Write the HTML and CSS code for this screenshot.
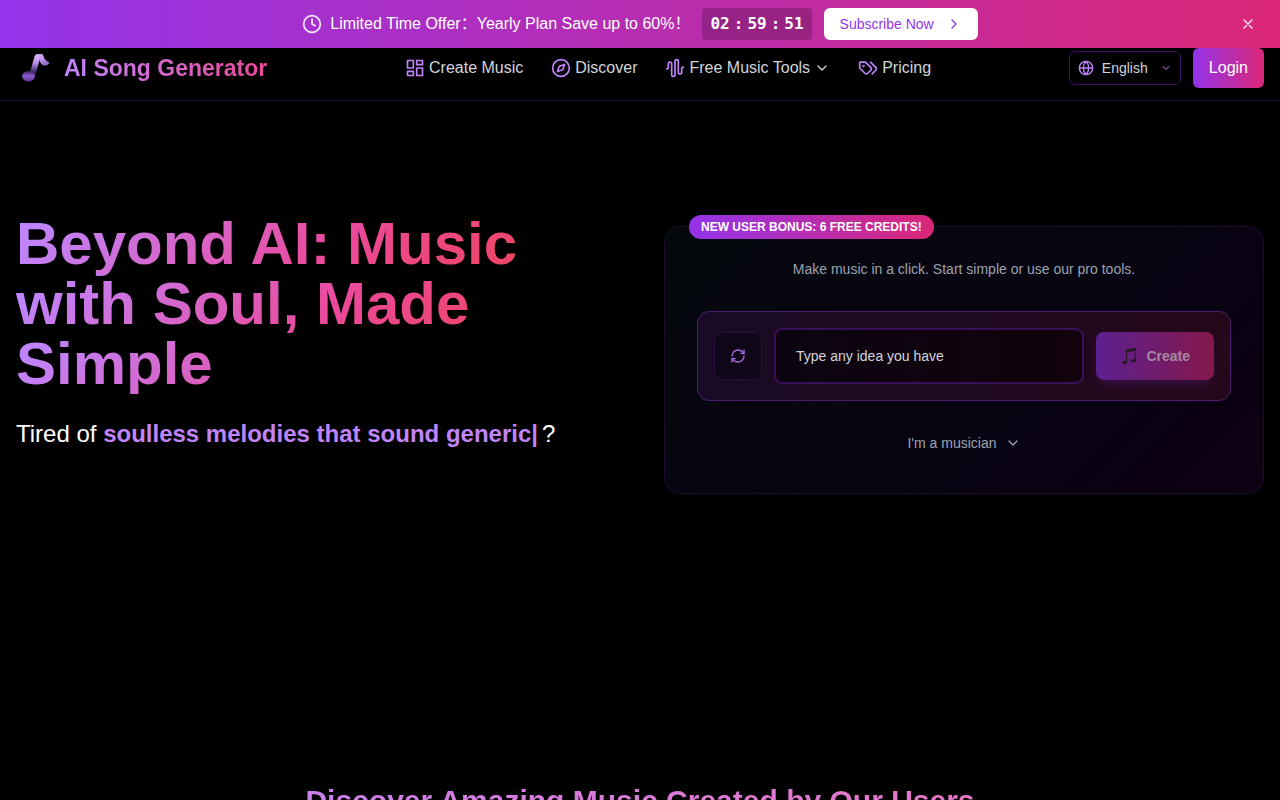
FILE: index.html
```html
<!DOCTYPE html>
<html lang="en">
<head>
<meta charset="utf-8">
<meta name="viewport" content="width=device-width, initial-scale=1">
<title>AI Song Generator</title>
<link rel="stylesheet" href="styles.css">
</head>
<body>
<div class="promo">
  <div class="promo-main">
    <p class="promo-text">
      <svg class="icon promo-clock" viewBox="0 0 24 24"><circle cx="12" cy="12" r="10"/><path d="M12 6v6l4 2"/></svg>
      <span>Limited Time Offer：Yearly Plan Save up to 60%！</span>
    </p>
    <div class="timer"><span>02</span><span>:</span><span>59</span><span>:</span><span>51</span></div>
    <a class="subscribe" href="#">Subscribe Now
      <svg class="icon" viewBox="0 0 24 24"><path d="m9 18 6-6-6-6"/></svg>
    </a>
  </div>
  <button class="promo-close" type="button" aria-label="Close">
    <svg class="icon" viewBox="0 0 24 24"><path d="M18 6 6 18M6 6l12 12"/></svg>
  </button>
</div>

<header class="header">
  <a class="brand" href="#">
    <svg class="logo" viewBox="0 0 40 40" aria-hidden="true">
      <defs>
        <linearGradient id="note-stem" x1="0" y1="0" x2="0" y2="1"><stop offset="0" stop-color="#e0bcfd"/><stop offset=".4" stop-color="#b88ae6"/><stop offset=".75" stop-color="#4a3070"/><stop offset="1" stop-color="#2a1747"/></linearGradient>
        <linearGradient id="note-flag" x1="0" y1="0" x2="1" y2="1"><stop offset="0" stop-color="#e5c6ff"/><stop offset=".5" stop-color="#b48be6"/><stop offset="1" stop-color="#7a5ab4"/></linearGradient>
        <linearGradient id="note-head" x1="0" y1="0" x2="0" y2="1"><stop offset="0" stop-color="#3a2160"/><stop offset=".45" stop-color="#8a5cd0"/><stop offset="1" stop-color="#5a3596"/></linearGradient>
      </defs>
      <path d="M18.500 8.500Q19 6.500 21 6.300L25 7 19 28.500 13.500 26Z" fill="url(#note-stem)"/>
      <path d="M20 6.500 25.500 6Q27 6 27.500 8 28.500 12 33.500 14.500 32 18 28 17.500 25 17 23 11Z" fill="url(#note-flag)"/>
      <ellipse cx="12.500" cy="28.300" rx="6.300" ry="5.200" fill="url(#note-head)"/>
    </svg>
    <span class="brand-name">AI Song Generator</span>
  </a>
  <nav class="nav">
    <a href="#"><svg class="icon" viewBox="0 0 24 24"><rect x="3" y="3" width="7" height="9"/><rect x="14" y="3" width="7" height="5"/><rect x="14" y="12" width="7" height="9"/><rect x="3" y="16" width="7" height="5"/></svg>Create Music</a>
    <a href="#"><svg class="icon" viewBox="0 0 24 24"><circle cx="12" cy="12" r="10"/><path d="m16.240 7.760-1.800 5.410a2 2 0 0 1-1.270 1.270L7.760 16.240l1.800-5.410a2 2 0 0 1 1.270-1.270z"/></svg>Discover</a>
    <a href="#"><svg class="icon" viewBox="0 0 24 24"><path d="M2 13a2 2 0 0 0 2-2V7a2 2 0 0 1 4 0v13a2 2 0 0 0 4 0V4a2 2 0 0 1 4 0v13a2 2 0 0 0 4 0v-4a2 2 0 0 1 2-2"/></svg>Free Music Tools<svg class="icon nav-arrow" viewBox="0 0 24 24"><path d="m6 9 6 6 6-6"/></svg></a>
    <a href="#"><svg class="icon" viewBox="0 0 24 24"><path d="m15 5 6.300 6.300a2.400 2.400 0 0 1 0 3.400L17 19"/><path d="M9.586 5.586A2 2 0 0 0 8.172 5H3a1 1 0 0 0-1 1v5.172a2 2 0 0 0 .586 1.414L8.290 18.290a2.426 2.426 0 0 0 3.420 0l3.580-3.580a2.426 2.426 0 0 0 0-3.420z"/><circle cx="6.500" cy="9.500" r=".5"/></svg>Pricing</a>
  </nav>
  <div class="account">
    <button class="language" type="button">
      <svg class="icon" viewBox="0 0 24 24"><circle cx="12" cy="12" r="10"/><path d="M12 2a14.500 14.500 0 0 0 0 20 14.500 14.500 0 0 0 0-20M2 12h20"/></svg>
      <span>English</span>
      <svg class="icon language-arrow" viewBox="0 0 24 24"><path d="m6 9 6 6 6-6"/></svg>
    </button>
    <button class="login" type="button">Login</button>
  </div>
</header>

<main>
  <section class="hero">
    <div class="pitch">
      <h1>Beyond AI: Music with Soul, Made Simple</h1>
      <p class="tagline">Tired of <strong>soulless melodies that sound generic<span class="caret">|</span></strong>?</p>
    </div>
    <div class="panel">
      <span class="bonus">NEW USER BONUS: 6 FREE CREDITS!</span>
      <p class="panel-intro">Make music in a click. Start simple or use our pro tools.</p>
      <form class="prompt">
        <button class="shuffle" type="button" aria-label="Refresh idea">
          <svg class="icon" viewBox="0 0 24 24"><path d="M3 12a9 9 0 0 1 9-9 9.750 9.750 0 0 1 6.740 2.740L21 8"/><path d="M21 3v5h-5"/><path d="M21 12a9 9 0 0 1-9 9 9.750 9.750 0 0 1-6.740-2.740L3 16"/><path d="M8 16H3v5"/></svg>
        </button>
        <input class="idea" type="text" aria-label="Song idea" placeholder="Type any idea you have">
        <button class="create" type="button" disabled>
          <svg class="create-note" viewBox="0 0 18 18" aria-hidden="true"><path d="M6 2.500 16 .8v3L6 5.500Z" fill="#241826"/><path d="M6.600 3v12M15.300 2v11" fill="none" stroke="#2c2030" stroke-width="1.300"/><ellipse cx="4.700" cy="15.500" rx="2.600" ry="1.700" fill="#241826"/><ellipse cx="13.400" cy="13.800" rx="2.600" ry="1.700" fill="#241826"/></svg>
          <span>Create</span>
        </button>
      </form>
      <button class="musician" type="button">I'm a musician
        <svg class="icon" viewBox="0 0 24 24"><path d="m6 9 6 6 6-6"/></svg>
      </button>
    </div>
  </section>
  <section class="discover">
    <h2>Discover Amazing Music Created by Our Users</h2>
  </section>
</main>
</body>
</html>
```
FILE: styles.css
```css
*, *::before, *::after { box-sizing: border-box; }

body {
  margin: 0;
  background: #000;
  color: #fff;
  font: 16px/24px "Liberation Sans", "Noto Sans CJK SC", Arial, sans-serif;
}

h1, h2, p { margin: 0; }
a { color: inherit; text-decoration: none; }
button, input { font: inherit; color: inherit; margin: 0; }
button { border: 0; padding: 0; background: none; cursor: pointer; }

.icon {
  width: 16px;
  height: 16px;
  flex: none;
  fill: none;
  stroke: currentColor;
  stroke-width: 2;
  stroke-linecap: round;
  stroke-linejoin: round;
}

/* Promo bar */
.promo {
  display: grid;
  grid-template-columns: 32px 1fr 32px;
  align-items: center;
  padding: 8px 16px;
  background: linear-gradient(90deg, #9333ea, #db2777);
}
.promo-main {
  grid-column: 2;
  display: flex;
  justify-content: center;
  align-items: center;
  gap: 12px;
}
.promo-text { display: flex; align-items: center; gap: 8px; }
.promo-clock { width: 20px; height: 20px; opacity: .9; }
.timer {
  display: flex;
  gap: 4px;
  padding: 4px 8px;
  border-radius: 4px;
  background: rgba(0, 0, 0, .2);
  font-family: "DejaVu Sans Mono", monospace;
  font-weight: 700;
}
.subscribe {
  display: flex;
  align-items: center;
  gap: 12px;
  padding: 6px 16px;
  border-radius: 6px;
  background: #fff;
  color: #9333ea;
  font-size: 14px;
  line-height: 20px;
}
.promo-close { display: grid; place-items: center; height: 32px; opacity: .9; }

/* Header */
.header {
  display: flex;
  align-items: center;
  justify-content: space-between;
  padding: 0 16px 12px;
  border-bottom: 1px solid #1e0a31;
}
.brand { display: flex; align-items: center; gap: 8px; }
.logo { width: 40px; height: 40px; }
.brand-name {
  font-size: 23px;
  line-height: 32px;
  font-weight: 700;
  background: linear-gradient(90deg, #c084fc, #ec4899);
  background-clip: text;
  color: transparent;
}
.nav { display: flex; gap: 28px; color: #d1d5db; }
.nav a { display: flex; align-items: center; gap: 4px; }
.nav .icon { width: 20px; height: 20px; color: #c084fc; }
.nav .nav-arrow { width: 16px; height: 16px; color: inherit; }
.account { display: flex; align-items: center; gap: 12px; }
.language {
  display: flex;
  align-items: center;
  gap: 8px;
  min-width: 112px;
  padding: 6px 8px;
  border: 1px solid #3b1264;
  border-radius: 6px;
  color: #d1d5db;
  font-size: 14px;
  line-height: 20px;
}
.language .icon { color: #c084fc; }
.language .language-arrow { width: 12px; height: 12px; margin-left: auto; }
.login {
  padding: 8px 16px;
  border-radius: 6px;
  background: linear-gradient(90deg, #9333ea, #db2777);
}

/* Hero */
.hero {
  display: grid;
  grid-template-columns: 1fr 1fr;
  gap: 48px;
  align-items: start;
  padding: 113px 16px 289px;
}
h1 {
  font-size: 60px;
  line-height: 60px;
  background: linear-gradient(135deg, #c084fc 5%, #ec4899 54%, #ef4444) 0 0 / 100% 60px;
  background-clip: text;
  color: transparent;
}
.tagline { margin-top: 24px; font-size: 24px; line-height: 32px; }
.tagline strong { color: #c084fc; }
.caret { margin-right: 4px; }

.panel {
  position: relative;
  display: flex;
  flex-direction: column;
  margin-top: 12px;
  padding: 32px;
  border: 1px solid #1c0b2d;
  border-radius: 16px;
  background: linear-gradient(135deg, #03090a, #06070f 15%, #080412 60%, #0a0012 85%, #100014);
}
.bonus {
  position: absolute;
  top: -12px;
  left: 24px;
  padding: 4px 12px;
  border-radius: 12px;
  background: linear-gradient(90deg, #9333ea, #db2777);
  font-size: 12px;
  line-height: 16px;
  font-weight: 700;
}
.panel-intro {
  color: #9ca3af;
  font-size: 14px;
  line-height: 20px;
  text-align: center;
}
.prompt {
  display: flex;
  align-items: center;
  gap: 12px;
  margin: 32px 0;
  padding: 16px;
  border: 1px solid #4c1d70;
  border-radius: 12px;
  background: linear-gradient(90deg, #190a25, #25081a);
}
.shuffle {
  display: grid;
  place-items: center;
  flex: none;
  width: 48px;
  height: 48px;
  border: 1px solid #2b1040;
  border-radius: 8px;
  background: #0f0617;
  color: #a869df;
}
.idea {
  flex: 1;
  min-width: 0;
  height: 56px;
  padding: 0 20px;
  border: 2px solid #381057;
  border-radius: 8px;
  background: linear-gradient(90deg, #0c0511, #12030c);
  font-size: 14px;
}
.idea::placeholder { color: #d1d5db; opacity: 1; }
.create {
  display: flex;
  align-items: center;
  justify-content: center;
  gap: 8px;
  height: 48px;
  padding: 0 24px;
  border-radius: 8px;
  background: linear-gradient(90deg, #5b2090, #85184b);
  box-shadow: 0 8px 12px -3px rgba(88, 28, 135, .35);
  color: #a58a9f;
  font-size: 14px;
  font-weight: 700;
}
.create-note { width: 18px; height: 18px; }
.musician {
  display: flex;
  align-items: center;
  align-self: center;
  gap: 8px;
  padding: 0 0 8px;
  color: #9ca3af;
  font-size: 14px;
  line-height: 20px;
}

.discover { padding: 0 16px 48px; text-align: center; }
h2 {
  font-size: 30px;
  line-height: 36px;
  background: linear-gradient(90deg, #c084fc, #f472b6);
  background-clip: text;
  color: transparent;
}
```
